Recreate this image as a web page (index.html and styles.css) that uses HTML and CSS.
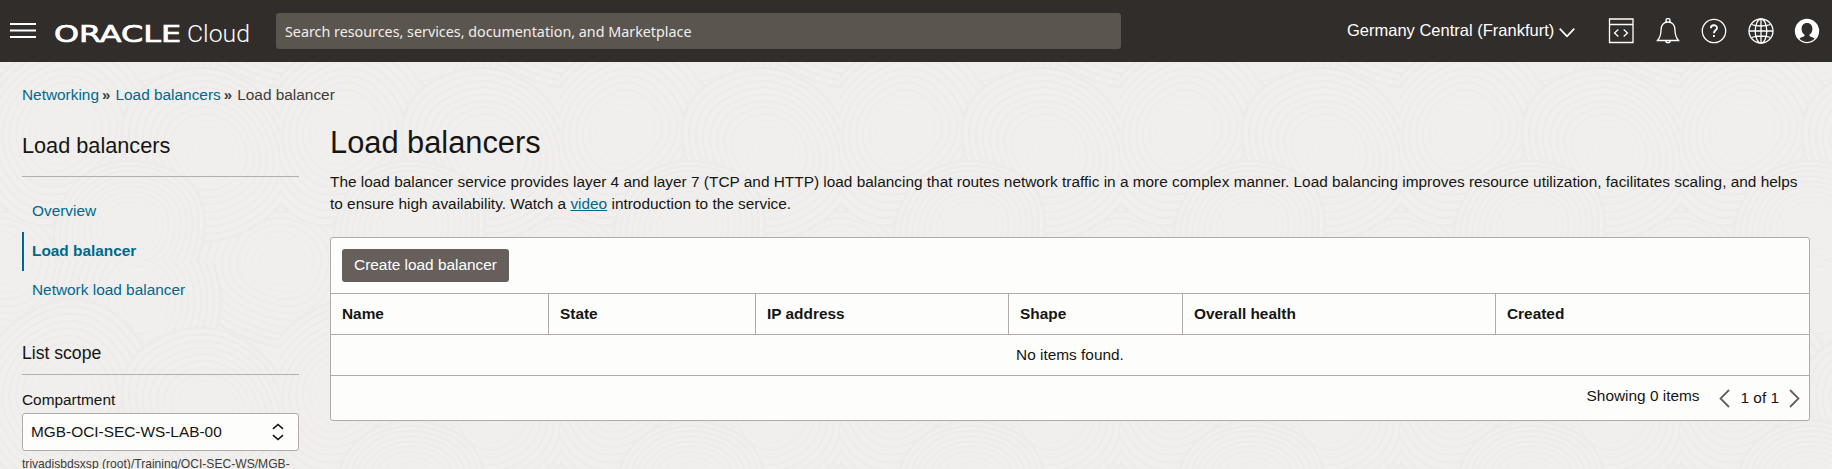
FILE: index.html
```
<!DOCTYPE html>
<html lang="en">
<head>
<meta charset="utf-8">
<title>Load balancers</title>
<link rel="stylesheet" href="styles.css">
</head>
<body>
<svg class="backdrop" aria-hidden="true">
  <defs>
    <g id="swirl" class="swirl">
      <path d="M-92 8C-88-52-38-86 20-80S98-34 92 18 44 88-14 84-96 50-92 8Z"/>
      <path d="M-92 8C-88-52-38-86 20-80S98-34 92 18 44 88-14 84-96 50-92 8Z" transform="scale(.92)"/>
      <path d="M-92 8C-88-52-38-86 20-80S98-34 92 18 44 88-14 84-96 50-92 8Z" transform="scale(.84)"/>
      <path d="M-92 8C-88-52-38-86 20-80S98-34 92 18 44 88-14 84-96 50-92 8Z" transform="scale(.76)"/>
      <path d="M-92 8C-88-52-38-86 20-80S98-34 92 18 44 88-14 84-96 50-92 8Z" transform="scale(.68)"/>
      <path d="M-92 8C-88-52-38-86 20-80S98-34 92 18 44 88-14 84-96 50-92 8Z" transform="scale(.6)"/>
      <path d="M-92 8C-88-52-38-86 20-80S98-34 92 18 44 88-14 84-96 50-92 8Z" transform="scale(.52)"/>
      <path d="M-92 8C-88-52-38-86 20-80S98-34 92 18 44 88-14 84-96 50-92 8Z" transform="scale(.44)"/>
      <path d="M-92 8C-88-52-38-86 20-80S98-34 92 18 44 88-14 84-96 50-92 8Z" transform="scale(.36)"/>
      <path d="M-92 8C-88-52-38-86 20-80S98-34 92 18 44 88-14 84-96 50-92 8Z" transform="scale(.28)"/>
      <path d="M-92 8C-88-52-38-86 20-80S98-34 92 18 44 88-14 84-96 50-92 8Z" transform="scale(.2)"/>
      <path d="M-92 8C-88-52-38-86 20-80S98-34 92 18 44 88-14 84-96 50-92 8Z" transform="scale(.12)"/>
    </g>
    <pattern id="rings" width="280" height="260" patternUnits="userSpaceOnUse">
      <use href="#swirl" transform="translate(0 0) rotate(20)"/>
      <use href="#swirl" transform="translate(280 0) rotate(20)"/>
      <use href="#swirl" transform="translate(0 260) rotate(20)"/>
      <use href="#swirl" transform="translate(280 260) rotate(20)"/>
      <use href="#swirl" transform="translate(140 40) rotate(100)"/>
      <use href="#swirl" transform="translate(60 130) rotate(-40)"/>
      <use href="#swirl" transform="translate(210 150) rotate(60) scale(.95)"/>
      <use href="#swirl" transform="translate(130 225) rotate(10) scale(.8)"/>
    </pattern>
  </defs>
  <rect width="100%" height="100%" fill="url(#rings)"/>
</svg>

<header class="topbar">
  <svg class="menu" width="26" height="16" viewBox="0 0 26 16"><path d="M0 1h26M0 7.5h26M0 14h26"/></svg>
  <svg class="logo" width="200" height="30" viewBox="0 0 200 30">
    <text class="logo-oracle" x="0" y="24.500" textLength="127" lengthAdjust="spacingAndGlyphs">ORACLE</text>
    <text class="logo-cloud" x="133" y="24.500" textLength="63" lengthAdjust="spacingAndGlyphs">Cloud</text>
  </svg>
  <div class="search">Search resources, services, documentation, and Marketplace</div>
  <div class="region"><span>Germany Central (Frankfurt)</span>
    <svg width="16" height="10" viewBox="0 0 16 10"><path d="M.7.7 8 8.3 15.3.7"/></svg>
  </div>
  <nav class="tools">
    <svg width="26" height="26" viewBox="0 0 26 26"><path d="M1.500 1h23.500v23.500H1.500zM1.500 6.500h23.500M10.300 11.500 6.500 15l3.800 3.500M15.700 11.500 19.500 15l-3.800 3.500"/></svg>
    <svg width="26" height="26" viewBox="0 0 26 26"><path d="M2.500 22.500h21c-2.500-3-3.500-6-3.500-10 0-5-2-8.500-7-8.500s-7 3.500-7 8.500c0 4-1 7-3.500 10ZM11 4V2.500a2 2 0 0 1 4 0V4M10.800 22.700a2.200 2 0 0 0 4.400 0"/></svg>
    <svg width="26" height="26" viewBox="0 0 26 26"><circle cx="13" cy="13" r="11.700"/><path class="bold" d="M9.800 10.300c0-4 6.200-4 6.200-.4 0 2.300-3.100 2.500-3.100 5.300M12.900 17v2"/></svg>
    <svg width="26" height="26" viewBox="0 0 26 26"><circle cx="13" cy="13" r="12"/><ellipse cx="13" cy="13" rx="5.800" ry="12"/><path d="M13 1v24M1 13h24M3.500 6.500c5 2 14 2 19 0M3.500 19.500c5-2 14-2 19 0"/></svg>
    <svg width="26" height="26" viewBox="0 0 26 26"><circle class="solid" cx="13" cy="13" r="11.500"/><path class="person" d="M13 5c3.600 0 5.400 2.500 5.400 6 0 2.600-1.200 4.600-2.900 5.600v1.200c0 1 4 1.200 5 3-4 4.200-11 4.200-15 0 1-1.800 5-2 5-3v-1.200c-1.700-1-2.900-3-2.900-5.600 0-3.500 1.800-6 5.400-6Z"/></svg>
  </nav>
</header>

<div class="page">
  <nav class="crumbs"><a>Networking</a><span class="sep">»</span><a>Load balancers</a><span class="sep">»</span><span>Load balancer</span></nav>
  <div class="columns">
    <aside class="sidebar">
      <h2 class="side-title">Load balancers</h2>
      <ul class="links">
        <li>Overview</li>
        <li class="active">Load balancer</li>
        <li>Network load balancer</li>
      </ul>
      <h3 class="scope-title">List scope</h3>
      <div class="label">Compartment</div>
      <div class="select">MGB-OCI-SEC-WS-LAB-00
        <svg width="12" height="18" viewBox="0 0 12 18"><path d="M1 5.800 6 1.500l5 4.300M1 12.200l5 4.300 5-4.300"/></svg>
      </div>
      <div class="hint">trivadisbdsxsp (root)/Training/OCI-SEC-WS/MGB-</div>
    </aside>
    <main class="main">
      <h1 class="title">Load balancers</h1>
      <p class="intro">The load balancer service provides layer 4 and layer 7 (TCP and HTTP) load balancing that routes network traffic in a more complex manner. Load balancing improves resource utilization, facilitates scaling, and helps<br>to ensure high availability. Watch a <a class="video">video</a> introduction to the service.</p>
      <section class="panel">
        <div class="toolbar"><button class="create">Create load balancer</button></div>
        <div class="row head">
          <div>Name</div><div>State</div><div>IP address</div><div>Shape</div><div>Overall health</div><div>Created</div>
        </div>
        <div class="row empty">No items found.</div>
        <div class="row footer">
          <span class="count">Showing 0 items</span>
          <svg width="11" height="19" viewBox="0 0 11 19"><path d="M10 1 1.500 9.500 10 18"/></svg>
          <span class="pages">1 of 1</span>
          <svg width="11" height="19" viewBox="0 0 11 19"><path d="M1 1l8.500 8.500L1 18"/></svg>
        </div>
      </section>
    </main>
  </div>
</div>
</body>
</html>
```
FILE: styles.css
```
* { box-sizing: border-box; }
body {
  margin: 0;
  height: 469px;
  overflow: hidden;
  background: #f0efed;
  color: #161513;
  font: 15.4px/22px "Liberation Sans", Arial, sans-serif;
}
h1, h2, h3, p, ul { margin: 0; padding: 0; font-weight: 400; }
svg { display: block; flex: none; fill: none; }
.backdrop { position: absolute; inset: 0; width: 100%; height: 469px; z-index: -1; }
.swirl { fill: #f0efed; stroke: #ecebe9; stroke-width: 2.4; }

.topbar { display: flex; align-items: flex-start; height: 62px; padding-left: 10px; background: #312d2a; color: #fff; }
.topbar svg { stroke: #fff; stroke-width: 1.3; }
.topbar .menu { margin-top: 23px; stroke-width: 2; }
.topbar .logo { margin: 17px 0 0 18px; fill: #fff; stroke: none; }
.topbar .logo-oracle { font: 22.500px "DejaVu Sans", sans-serif; stroke: #fff; stroke-width: .7; }
.logo-cloud { font: 300 24.500px Roboto, sans-serif; }
.search {
  width: 845px;
  height: 36px;
  margin: 13px 0 0 22px;
  padding-left: 9px;
  border-radius: 3px;
  background: #5b554f;
  color: #f1efed;
  font: 14.320px/37px "Noto Sans", sans-serif;
}
.region { display: flex; align-items: center; gap: 4px; margin: 19px 0 0 226px; width: 228px; white-space: nowrap; font-size: 16.500px; }
.region span { width: 208px; }
.region svg { margin-top: 5px; stroke-width: 1.700; }
.tools { display: flex; gap: 20.500px; margin: 18px 0 0 33px; }
.tools .bold { stroke-width: 1.8; }
.tools .solid { fill: #fff; }
.tools .person { fill: #312d2a; stroke: none; }

.page { padding: 22px 31px 0 22px; }
.crumbs { display: flex; height: 21px; color: #403c38; }
.crumbs a, .links { color: #00688c; }
.sep { width: 16.500px; padding-left: 3px; font-size: 15px; font-weight: 700; }
.columns { display: flex; gap: 31px; }
.sidebar { flex: none; width: 277px; }
.side-title { height: 72px; padding-top: 29px; border-bottom: 1px solid #b4afac; font-size: 21.700px; line-height: 24px; }
.links { padding-top: 15px; list-style: none; }
.links li { height: 39.500px; padding-left: 10px; line-height: 37px; }
.links .active { padding-left: 8px; border-left: 2px solid #00688c; font-weight: 700; }
.scope-title { height: 64px; padding-top: 31px; border-bottom: 1px solid #b4afac; font-size: 17.600px; }
.label { padding: 14px 0 2px; }
.select {
  display: flex;
  align-items: center;
  justify-content: space-between;
  height: 38px;
  padding: 0 14px 0 8px;
  border: 1px solid #b0aba8;
  border-radius: 3px;
  background: #fdfdfc;
}
.select svg { stroke: #161513; stroke-width: 1.6; }
.hint { padding-top: 5px; color: #403c38; font-size: 12.100px; line-height: 16px; white-space: nowrap; }

.main { flex: none; }
.title { padding-top: 20px; font-size: 30.800px; line-height: 36px; }
.intro { margin-top: 10px; white-space: nowrap; }
.video { color: #00688c; text-decoration: underline; }
.panel { margin-top: 22px; width: 1480px; border: 1px solid #b0aba8; border-radius: 3px; background: #fdfdfc; }
.toolbar { height: 55px; padding: 11px; }
.create {
  display: block;
  width: 167px;
  height: 33px;
  padding: 0 0 1px;
  border: 0;
  border-radius: 3px;
  background: #665f5b;
  color: #fff;
  font: inherit;
}
.row { height: 41px; border-top: 1px solid #b0aba8; line-height: 40px; }
.head { display: grid; grid-template-columns: 217px 207px 253px 174px 313px 1fr; font-weight: 700; }
.head div { padding-left: 11px; }
.head div + div { border-left: 1px solid #b0aba8; }
.empty { text-align: center; }
.footer { display: flex; align-items: center; height: 45px; padding-right: 9px; justify-content: flex-end; line-height: 22px; }
.footer svg { stroke: #66605c; stroke-width: 1.800; }
.count { margin: -4px 20px 0 0; }
.pages { padding: 0 10px; }
```
